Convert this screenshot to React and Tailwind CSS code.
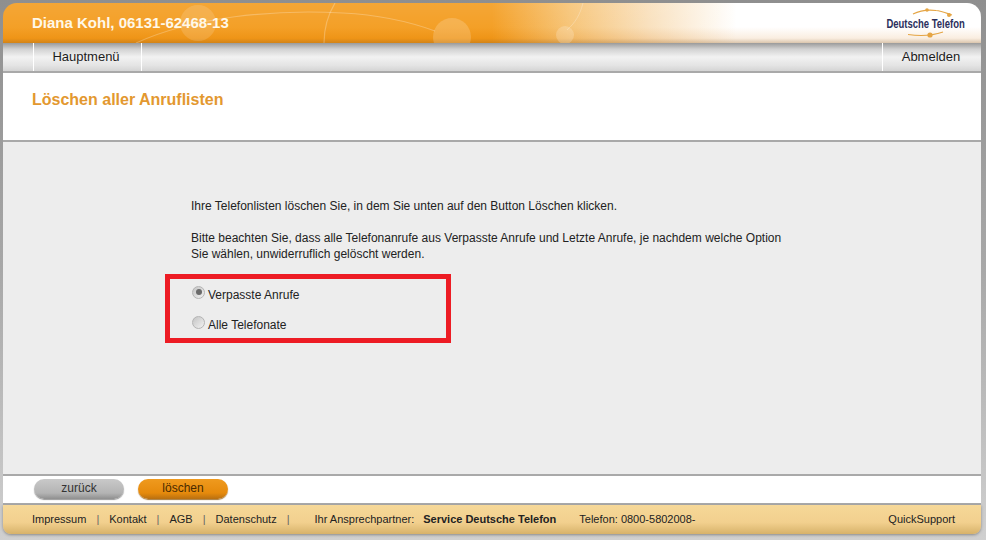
import React from "react";

function HeaderDecor() {
  return (
    <svg className="absolute inset-0 h-full w-full" viewBox="0 0 978 40" fill="none">
      <circle cx="195" cy="20" r="18" fill="#fff" fillOpacity="0.14" />
      <path d="M133 40 C190 14 270 6 340 10 C380 12 410 20 432 28" stroke="#fff" strokeOpacity="0.25" strokeWidth="1.2" />
      <path d="M332 0 C326 10 321 22 321 40" stroke="#fff" strokeOpacity="0.25" strokeWidth="1.2" />
      <circle cx="449" cy="34" r="19" fill="#fff" fillOpacity="0.18" />
      <circle cx="562" cy="32" r="9" fill="#fff" fillOpacity="0.2" />
      <path d="M580 0 C577 12 572 20 564 27" stroke="#fff" strokeOpacity="0.25" strokeWidth="1" />
    </svg>
  );
}

function Logo() {
  return (
    <div className="relative flex h-[30px] w-[80px] flex-col items-center justify-center">
      <svg className="absolute inset-0" width="80" height="30" viewBox="0 0 80 30" fill="none">
        <path d="M27 6 C33 3 42 1.5 50 2.5 C55 3 60 5 66 7" stroke="#e5a544" strokeWidth="1.1" />
        <circle cx="41" cy="2" r="1.8" fill="#e5a544" />
        <circle cx="63" cy="7" r="2" fill="#e5a544" />
        <path d="M22 26.5 C32 28 44 28.5 57 24" stroke="#e5a544" strokeWidth="1.1" />
        <circle cx="44" cy="27" r="2.6" fill="#e5a544" />
      </svg>
      <span className="relative mt-[1px] origin-center scale-x-[0.79] text-[12px] leading-none font-bold whitespace-nowrap text-[#2b2f5c]">Deutsche Telefon</span>
    </div>
  );
}

function Radio({ checked, label }) {
  return (
    <div className="flex h-[30px] items-center">
      <span className="mb-[6px] ml-[1px] flex h-[13px] w-[13px] items-center justify-center rounded-full border border-[#b4b4b4] bg-gradient-to-br from-[#c4c4c4] to-[#f2f2f2]">
        {checked && <span className="h-[6px] w-[6px] rounded-full bg-[#6a6a6a]" />}
      </span>
      <span className="ml-[3px] text-[12px] text-[#222]">{label}</span>
    </div>
  );
}

function Sep() {
  return <span className="mx-[10px] text-[#666]">|</span>;
}

export default function App() {
  return (
    <div className="h-[540px] w-[986px] overflow-hidden bg-gradient-to-b from-[#8f8f8f] via-[#a8a8a8] to-[#d0d0d0] pt-[3px] pl-[3px] font-['Liberation_Sans',Arial,sans-serif]">
      <div className="flex h-[532px] w-[978px] flex-col">
        <header className="relative flex h-[40px] items-center justify-between overflow-hidden rounded-t-[14px] bg-[linear-gradient(90deg,#f39a1a_0%,#f39a1a_50%,#f6c272_58%,#f9dfba_66%,#ffffff_75%,#ffffff_100%)] pr-[15px] pl-[29px]">
          <div className="absolute inset-0 bg-[linear-gradient(180deg,rgba(255,255,255,0.12)_0%,rgba(255,255,255,0.06)_60%,rgba(210,110,0,0.12)_88%,rgba(150,90,20,0.35)_100%)]" />
          <HeaderDecor />
          <span className="relative mt-[1px] text-[15px] font-bold text-[#fff8e8]">Diana Kohl, 06131-62468-13</span>
          <div className="relative"><Logo /></div>
        </header>

        <nav className="flex h-[30px] items-stretch justify-between border-b-2 border-[#a9a9a9] bg-[linear-gradient(180deg,#9a9a9a_0%,#d2d2d2_22%,#f2f2f2_50%,#e4e4e4_80%,#d4d4d4_100%)] text-[13px] text-[#1c1c1c]">
          <div className="ml-[30px] flex w-[109px] items-center justify-center border-x border-white pr-[3px]">Hauptmenü</div>
          <div className="flex w-[99px] items-center justify-center border-l border-white pr-[2px]">Abmelden</div>
        </nav>

        <div className="h-[69px] border-b-2 border-[#a9a9a9] bg-white pt-[17px] pl-[29px]">
          <h1 className="text-[16px] leading-[20px] font-bold text-[#e3982f]">Löschen aller Anruflisten</h1>
        </div>

        <main className="relative h-[332px] bg-[#ededed] pt-[56px] pl-[188px] text-[12px] leading-[16px] text-[#222]">
          <p>Ihre Telefonlisten löschen Sie, in dem Sie unten auf den Button Löschen klicken.</p>
          <p className="mt-[16px] w-[600px]">Bitte beachten Sie, dass alle Telefonanrufe aus Verpasste Anrufe und Letzte Anrufe, je nachdem welche Option Sie wählen, unwiderruflich gelöscht werden.</p>
          <div className="mt-[18px]">
            <Radio checked label="Verpasste Anrufe" />
            <Radio label="Alle Telefonate" />
          </div>
          <div className="absolute top-[132px] left-[162px] h-[69px] w-[286px] border-[5px] border-[#ed1c24]" />
        </main>

        <div className="flex h-[31px] items-center gap-[14px] border-y-2 border-[#a9a9a9] bg-white pb-[2px] pl-[31px] text-[12px]">
          <button className="h-[20px] w-[90px] rounded-full bg-[linear-gradient(180deg,#c9c9c9_0%,#b4b4b4_70%,#8f8f8f_100%)] pb-[2px] text-[#333] shadow-[0_1px_1px_#999]">zurück</button>
          <button className="h-[20px] w-[90px] rounded-full bg-[linear-gradient(180deg,#ef9a1e_0%,#e68a0c_70%,#b96f10_100%)] pb-[2px] text-[#4a2a00] shadow-[0_1px_1px_#a87a3a]">löschen</button>
        </div>

        <footer className="flex h-[29px] items-center justify-between rounded-b-[8px] bg-[linear-gradient(180deg,#f6d898_0%,#f2d08e_60%,#d7b26a_100%)] pr-[26px] pl-[29px] text-[11px] text-[#222] shadow-[0_1px_3px_#888]">
          <div className="flex items-center">
            <span>Impressum</span>
            <Sep />
            <span>Kontakt</span>
            <Sep />
            <span>AGB</span>
            <Sep />
            <span>Datenschutz</span>
            <Sep />
            <span className="ml-[15px]">Ihr Ansprechpartner:</span>
            <span className="ml-[9px] font-bold">Service Deutsche Telefon</span>
            <span className="ml-[23px]">Telefon: 0800-5802008-</span>
          </div>
          <span>QuickSupport</span>
        </footer>
      </div>
    </div>
  );
}
